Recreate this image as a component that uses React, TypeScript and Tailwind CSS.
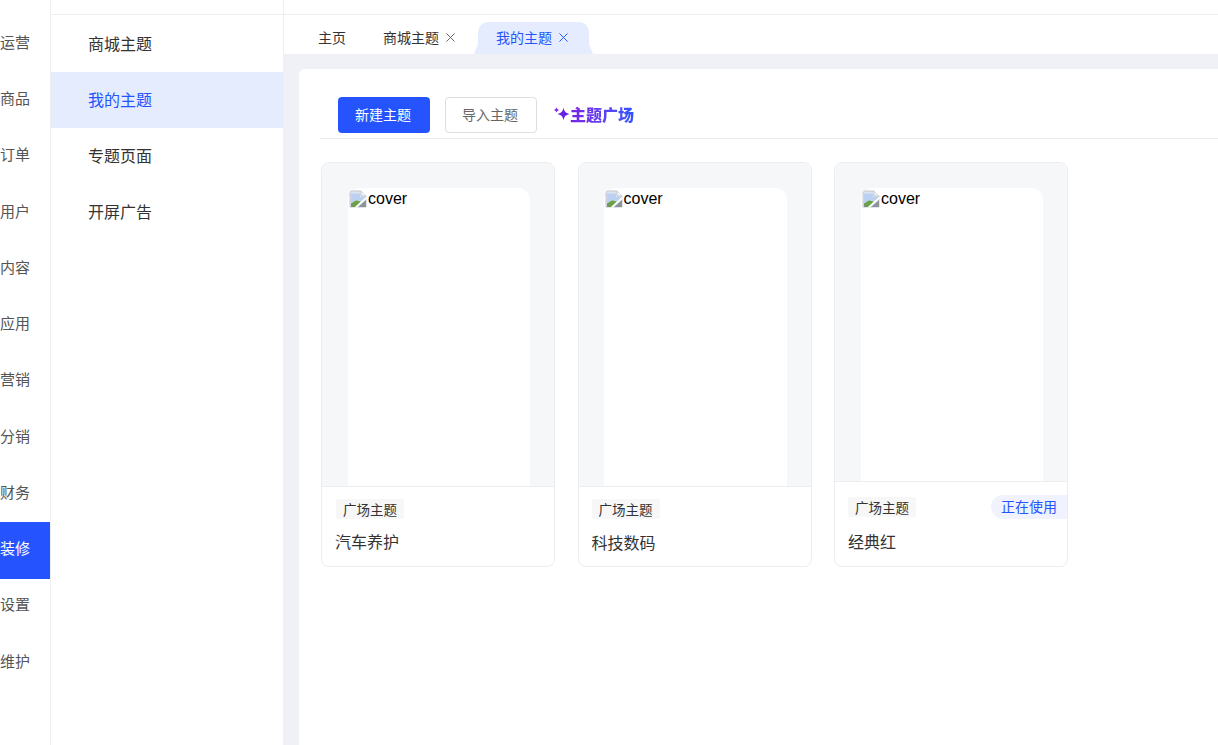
const FONT = "font-['Microsoft_YaHei','Noto_Sans_CJK_SC','Liberation_Sans',sans-serif]";

const railItems = ["运营", "商品", "订单", "用户", "内容", "应用", "营销", "分销", "财务", "装修", "设置", "维护"];
const subItems = ["商城主题", "我的主题", "专题页面", "开屏广告"];

function BrokenImage() {
  return (
    <svg width="18" height="18" viewBox="0 0 18 18" className="shrink-0 mt-[2px]">
      <path d="M1 17V3.500Q1 1 3.500 1H12l5 5v11z" fill="#dfe6f3" stroke="#c3c7cd" />
      <path d="M12 1v5h5" fill="#f4f5f7" stroke="#c3c7cd" />
      <path d="M2 3.500h9v3.500h5v3L2 13z" fill="#bcd0f2" />
      <path d="M2 13.500l5-3 5 1-5.500 5.500H2z" fill="#6ba33f" />
      <path d="M2 15l3-2-2 4H2z" fill="#7f8790" />
      <path d="M9 17l8-7v7z" fill="#8d939b" />
      <path d="M6.500 17.500L17.500 7.500" stroke="#fff" strokeWidth="1.600" />
    </svg>
  );
}

function Close() {
  return (
    <svg width="9" height="9" viewBox="0 0 10 10" fill="none" stroke="currentColor" strokeWidth="1.100">
      <path d="M.5.5l9 9M9.500.5l-9 9" />
    </svg>
  );
}

function Sparkle() {
  return (
    <svg width="16" height="16" viewBox="0 0 16 16" className="shrink-0">
      <path d="M9.500 1.500C10.300 5.700 11.300 6.800 15.500 8 11.300 9.200 10.300 10.300 9.500 14.500 8.700 10.300 7.700 9.200 3.500 8 7.700 6.800 8.700 5.700 9.500 1.500z" fill="#6a1fe6" />
      <path d="M2.500 1.500l.9 1.600 1.600.9-1.600.9-.9 1.600-.9-1.600L0 4l1.600-.9z" fill="#8a2be8" />
    </svg>
  );
}

type CardProps = {
  name: string;
  active?: boolean;
  footerPt: string;
  nameMt: string;
  coverH: string;
  phoneMl: string;
  phoneW: string;
  padL: string;
};

function ThemeCard({ name, active, footerPt, nameMt, coverH, phoneMl, phoneW, padL }: CardProps) {
  return (
    <div className="w-[234px] h-[405px] shrink-0 rounded-lg border border-[#ebedf0] bg-white overflow-hidden flex flex-col">
      <div className={`${coverH} shrink-0 bg-[#f6f7f9] pt-[25px] border-b border-[#ebedf0]`}>
        <div className={`${phoneMl} ${phoneW} h-full bg-white rounded-t-xl flex items-start pl-px font-['Liberation_Sans',sans-serif] text-base leading-[18px] text-black`}>
          <BrokenImage />
          <span className="mt-[2px] ml-px">cover</span>
        </div>
      </div>
      <div className={`${footerPt} ${padL} relative`}>
        <div className="flex items-center justify-between">
          <span className="h-5 px-[7px] bg-[#f7f7f8] rounded-[2px] text-[13.5px] leading-5 text-[#333]">广场主题</span>
          {active && (
            <span className="h-6 w-[76px] pl-[10px] bg-[#f0f3fe] rounded-l-full text-[14px] leading-[22px] text-[#2554ff]">正在使用</span>
          )}
        </div>
        <div className={`${nameMt} text-base leading-6 text-[#333]`}>{name}</div>
      </div>
    </div>
  );
}

export default function App() {
  return (
    <div className={`${FONT} w-[1218px] h-[745px] overflow-hidden flex bg-white`}>
      {/* main rail */}
      <div className="w-[51px] shrink-0 border-r border-[#eeeff2] pt-[16px] flex flex-col">
        {railItems.map((item) => (
          <div
            key={item}
            className={`h-[56.25px] shrink-0 pb-[4px] flex items-center text-[15px] ${item === "装修" ? "bg-[#2554ff] text-white" : "text-[#555]"}`}
          >
            {item}
          </div>
        ))}
      </div>

      {/* sub menu */}
      <div className="w-[233px] shrink-0 border-r border-[#eeeff2]">
        <div className="h-[15px] border-b border-[#eeeff2]" />
        <div className="pt-px">
          {subItems.map((item) => (
            <div
              key={item}
              className={`h-[56px] pl-[37px] pb-[2px] flex items-center text-base ${item === "我的主题" ? "bg-[#e5ecfd] text-[#2554ff]" : "text-[#333]"}`}
            >
              {item}
            </div>
          ))}
        </div>
      </div>

      <div className="flex-1 min-w-0 flex flex-col">
        <div className="h-[15px] shrink-0 border-b border-[#eeeff2]" />

        {/* tabs */}
        <div className="h-[39px] shrink-0 flex items-end text-sm">
          <div className="w-[99px] h-8 pl-[34px] pb-[2px] flex items-center text-[#333]">主页</div>
          <div className="w-[94px] h-8 pb-[2px] flex items-center gap-[7px] text-[#333]">
            商城主题
            <span className="text-[#666]"><Close /></span>
          </div>
          <div className="relative w-[111px] ml-[1px] h-8 pl-[18px] pb-[2px] flex items-center gap-[7px] rounded-t-[10px] bg-[#e5ecfd] text-[#2554ff]">
            我的主题
            <Close />
            <span className="absolute -left-[4px] bottom-0 w-[4px] h-[10px] bg-[#e5ecfd] [clip-path:polygon(100%_0,100%_100%,0_100%)]" />
            <span className="absolute -right-[4px] bottom-0 w-[4px] h-[10px] bg-[#e5ecfd] [clip-path:polygon(0_0,100%_100%,0_100%)]" />
          </div>
        </div>

        {/* content */}
        <div className="flex-1 min-h-0 bg-[#f0f1f6] pl-[15px] pt-[15px]">
          <div className="h-full bg-white rounded-tl-md pl-[21px] pt-7">
            <div className="h-[42px] border-b border-[#e8e9ec] pl-[18px] flex items-start">
              <button className="w-[92px] h-9 pr-[2px] pb-[2px] rounded bg-[#2554ff] text-white text-sm">新建主题</button>
              <button className="w-[92px] h-9 ml-[15px] pr-[2px] pb-[2px] rounded border border-[#dcdee2] bg-white text-[#666] text-sm">导入主题</button>
              <div className="ml-[17px] h-9 pb-[2px] flex items-center">
                <Sparkle />
                <span className="bg-gradient-to-r from-[#7a1fe6] to-[#2f55ff] bg-clip-text text-transparent text-base font-black">主题广场</span>
              </div>
            </div>

            <div className="flex gap-[22.5px] pt-[23px] pl-px">
              <ThemeCard name="汽车养护" coverH="h-[324px]" footerPt="pt-[12px]" nameMt="mt-[10px] -ml-px" padL="pl-[14px]" phoneMl="ml-[26px]" phoneW="w-[182px]" />
              <ThemeCard name="科技数码" coverH="h-[324px]" footerPt="pt-[12px]" nameMt="mt-[11px]" padL="pl-[13px]" phoneMl="ml-[25px]" phoneW="w-[183px]" />
              <ThemeCard name="经典红" active coverH="h-[319px]" footerPt="pt-[13px]" nameMt="mt-[10px]" padL="pl-[13px]" phoneMl="ml-[26px]" phoneW="w-[182px]" />
            </div>
          </div>
        </div>
      </div>
    </div>
  );
}
